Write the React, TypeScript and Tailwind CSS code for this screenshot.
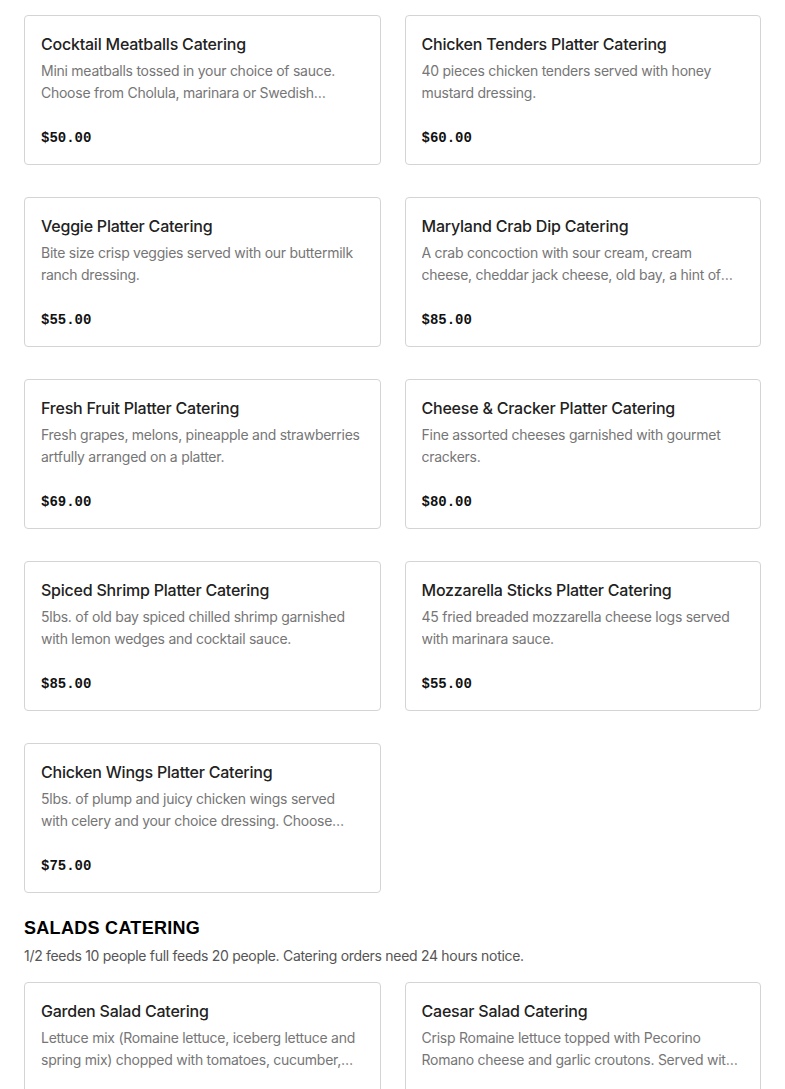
import React from "react";

const cateringItems = [
  {
    title: "Cocktail Meatballs Catering",
    desc: "Mini meatballs tossed in your choice of sauce. Choose from Cholula, marinara or Swedish meatball sauce.",
    price: "$50.00",
  },
  {
    title: "Chicken Tenders Platter Catering",
    desc: "40 pieces chicken tenders served with honey mustard dressing.",
    price: "$60.00",
  },
  {
    title: "Veggie Platter Catering",
    desc: "Bite size crisp veggies served with our buttermilk ranch dressing.",
    price: "$55.00",
  },
  {
    title: "Maryland Crab Dip Catering",
    desc: "A crab concoction with sour cream, cream cheese, cheddar jack cheese, old bay, a hint of lemon and served with tortilla chips.",
    price: "$85.00",
  },
  {
    title: "Fresh Fruit Platter Catering",
    desc: "Fresh grapes, melons, pineapple and strawberries artfully arranged on a platter.",
    price: "$69.00",
  },
  {
    title: "Cheese & Cracker Platter Catering",
    desc: "Fine assorted cheeses garnished with gourmet crackers.",
    price: "$80.00",
  },
  {
    title: "Spiced Shrimp Platter Catering",
    desc: "5lbs. of old bay spiced chilled shrimp garnished with lemon wedges and cocktail sauce.",
    price: "$85.00",
  },
  {
    title: "Mozzarella Sticks Platter Catering",
    desc: "45 fried breaded mozzarella cheese logs served with marinara sauce.",
    price: "$55.00",
  },
  {
    title: "Chicken Wings Platter Catering",
    desc: "5lbs. of plump and juicy chicken wings served with celery and your choice dressing. Choose from buffalo, BBQ or Old Bay.",
    price: "$75.00",
  },
];

const saladItems = [
  {
    title: "Garden Salad Catering",
    desc: "Lettuce mix (Romaine lettuce, iceberg lettuce and spring mix) chopped with tomatoes, cucumber, carrots and red onions.",
    price: "$45.00",
  },
  {
    title: "Caesar Salad Catering",
    desc: "Crisp Romaine lettuce topped with Pecorino Romano cheese and garlic croutons. Served with Caesar dressing.",
    price: "$45.00",
  },
];

type Item = { title: string; desc: string; price: string };

function MenuCard({ item }: { item: Item }) {
  return (
    <div className="rounded-[4px] border border-[#d4d4d4] bg-white px-4 pt-4 pb-4">
      <h3 className="text-[16px] leading-6 font-medium tracking-[-0.22px] text-[#222222]">
        {item.title}
      </h3>
      <p className="mt-1 min-h-[44px] text-[14px] leading-[22px] tracking-[-0.26px] text-[#767676] line-clamp-2">
        {item.desc}
      </p>
      <div
        className="mt-6 text-[14px] leading-5 font-bold text-[#111111]"
        style={{ fontFamily: '"Liberation Mono", "DejaVu Sans Mono", monospace' }}
      >
        {item.price}
      </div>
    </div>
  );
}

export default function App() {
  return (
    <div
      className="min-h-screen bg-white px-6 pt-[15px] pb-10"
      style={{ fontFamily: 'Inter, "Noto Sans", sans-serif' }}
    >
      <div className="grid grid-cols-2 gap-x-6 gap-y-8">
        {cateringItems.map((item) => (
          <MenuCard key={`catering-${item.title}`} item={item} />
        ))}
      </div>

      <h2
        className="mt-[23px] text-[18px] leading-6 font-black uppercase tracking-[0.3px] text-black"
        style={{ fontFamily: '"Liberation Sans", Arial, sans-serif' }}
      >
        Salads Catering
      </h2>
      <p className="mt-[5px] text-[14px] leading-[22px] tracking-[-0.3px] text-[#555555]">
        1/2 feeds 10 people full feeds 20 people. Catering orders need 24 hours notice.
      </p>

      <div className="mt-[15px] grid grid-cols-2 gap-x-6 gap-y-8">
        {saladItems.map((item) => (
          <MenuCard key={`salad-${item.title}`} item={item} />
        ))}
      </div>
    </div>
  );
}
